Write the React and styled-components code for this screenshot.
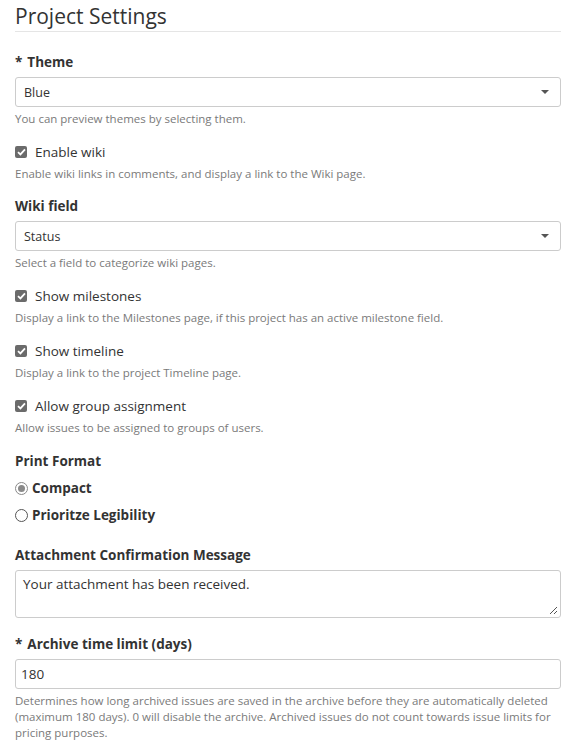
import React from "react";
import styled, { createGlobalStyle } from "styled-components";

const GlobalStyle = createGlobalStyle`
  body {
    margin: 0;
    background: #fff;
    font-family: "Segoe UI", "Open Sans", sans-serif;
    color: #333;
  }
`;

const Page = styled.div`
  padding: 0 7px 30px 15px;
`;

const Title = styled.h2`
  margin: 0 0 20px;
  padding: 3px 0 2px;
  font-size: 21px;
  font-weight: 400;
  line-height: 26px;
  color: #333;
  border-bottom: 1px solid #e5e5e5;
`;

const Group = styled.div`
  margin-bottom: ${(p) => p.$gap || 15}px;
`;

const Label = styled.div`
  font-size: 13.5px;
  font-weight: 700;
  line-height: 20px;
  margin-bottom: 5px;
`;

const Star = styled.span`
  margin-right: 5px;
`;

const SelectBox = styled.div`
  display: flex;
  align-items: center;
  justify-content: space-between;
  height: 28px;
  padding: 0 11px 0 8px;
  border: 1px solid #ccc;
  border-radius: 3px;
  font-size: 12.5px;
`;

const Caret = styled.span`
  width: 0;
  height: 0;
  border-left: 4px solid transparent;
  border-right: 4px solid transparent;
  border-top: 4px solid #555;
`;

const Help = styled.div`
  font-size: 11.5px;
  line-height: 16px;
  color: #7a7a7a;
  margin-top: ${(p) => p.$top || 4}px;
`;

const CheckRow = styled.label`
  display: flex;
  align-items: center;
  gap: 8px;
  font-size: 13.5px;
  line-height: 20px;
`;

const Box = styled.span`
  display: flex;
  align-items: center;
  justify-content: center;
  width: 12px;
  height: 12px;
  border-radius: 2px;
  background: #6b6b6b;
`;

const RadioRow = styled.label`
  display: flex;
  align-items: center;
  gap: 4px;
  font-size: 13.5px;
  font-weight: 700;
  line-height: 20px;
  margin-top: 7px;
`;

const Radio = styled.span`
  display: flex;
  align-items: center;
  justify-content: center;
  width: 11px;
  height: 11px;
  border-radius: 50%;
  border: 1px solid ${(p) => (p.$on ? "#8a8a8a" : "#555")};
  background: #fff;
  &::after {
    content: "";
    display: ${(p) => (p.$on ? "block" : "none")};
    width: 7px;
    height: 7px;
    border-radius: 50%;
    background: #8a8a8a;
  }
`;

const TextArea = styled.div`
  position: relative;
  height: 40px;
  padding: 3px 7px;
  border: 1px solid #ccc;
  border-radius: 3px;
  font-size: 13.5px;
  line-height: 20px;
`;

const Grip = styled.svg`
  position: absolute;
  right: 2px;
  bottom: 2px;
`;

const Input = styled.div`
  display: flex;
  align-items: center;
  height: 28px;
  padding: 0 5px;
  border: 1px solid #ccc;
  border-radius: 3px;
  font-size: 13.5px;
`;

function Check({ label }) {
  return (
    <CheckRow>
      <Box>
        <svg width="9" height="8" viewBox="0 0 9 8">
          <path d="M1 4.2 L3.4 6.4 L8 1.3" fill="none" stroke="#fff" strokeWidth="1.8" />
        </svg>
      </Box>
      {label}
    </CheckRow>
  );
}

const checks = [
  ["Show milestones", "Display a link to the Milestones page, if this project has an active milestone field.", 15],
  ["Show timeline", "Display a link to the project Timeline page.", 15],
  ["Allow group assignment", "Allow issues to be assigned to groups of users.", 15],
];

export default function App() {
  return (
    <>
      <GlobalStyle />
      <Page>
        <Title>Project Settings</Title>

        <Group>
          <Label>
            <Star>*</Star>Theme
          </Label>
          <SelectBox>
            Blue
            <Caret />
          </SelectBox>
          <Help>You can preview themes by selecting them.</Help>
        </Group>

        <Group $gap={14}>
          <Check label="Enable wiki" />
          <Help>Enable wiki links in comments, and display a link to the Wiki page.</Help>
        </Group>

        <Group>
          <Label>Wiki field</Label>
          <SelectBox>
            Status
            <Caret />
          </SelectBox>
          <Help>Select a field to categorize wiki pages.</Help>
        </Group>

        {checks.map(([label, help, gap]) => (
          <Group key={label} $gap={gap}>
            <Check label={label} />
            <Help>{help}</Help>
          </Group>
        ))}

        <Group $gap={20}>
          <Label>Print Format</Label>
          <RadioRow>
            <Radio $on />
            Compact
          </RadioRow>
          <RadioRow>
            <Radio />
            Prioritze Legibility
          </RadioRow>
        </Group>

        <Group $gap={16}>
          <Label>Attachment Confirmation Message</Label>
          <TextArea>
            Your attachment has been received.
            <Grip width="9" height="9" viewBox="0 0 9 9">
              <path d="M1 8 L8 1 M5 8 L8 5" stroke="#555" strokeWidth="1" />
            </Grip>
          </TextArea>
        </Group>

        <Group>
          <Label>
            <Star>*</Star>Archive time limit (days)
          </Label>
          <Input>180</Input>
          <Help>
            Determines how long archived issues are saved in the archive before they are automatically deleted
            (maximum 180 days). 0 will disable the archive. Archived issues do not count towards issue limits for
            pricing purposes.
          </Help>
        </Group>
      </Page>
    </>
  );
}
